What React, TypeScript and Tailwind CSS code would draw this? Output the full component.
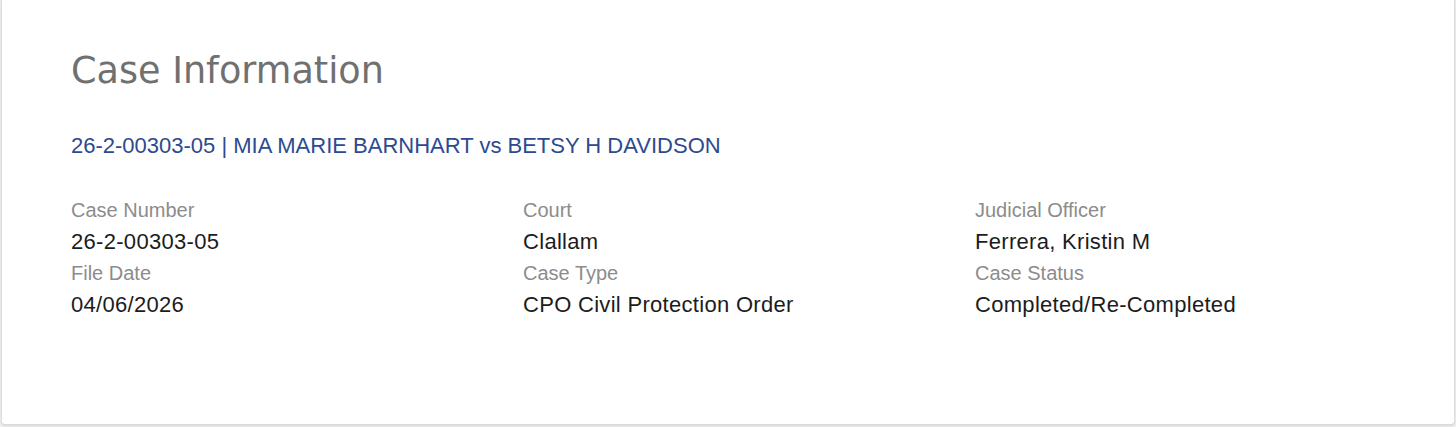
const fields = [
  [
    { label: 'Case Number', value: '26-2-00303-05' },
    { label: 'File Date', value: '04/06/2026' },
  ],
  [
    { label: 'Court', value: 'Clallam' },
    { label: 'Case Type', value: 'CPO Civil Protection Order' },
  ],
  [
    { label: 'Judicial Officer', value: 'Ferrera, Kristin M' },
    { label: 'Case Status', value: 'Completed/Re-Completed' },
  ],
]

function App() {
  return (
    <div className="w-[1456px] h-[427px] bg-[#f2f2f2] px-px overflow-hidden">
      {/* Card (top edge is scrolled out of view) */}
      <div className="h-[425px] bg-white border-x border-b border-[#dcdcdc] rounded-b-[4px] shadow-sm pl-[69px] pt-[50px] font-['Liberation_Sans',Arial,sans-serif]">
        <h2 className="font-['DejaVu_Sans',Verdana,sans-serif] text-[36.6px] leading-[42px] text-[#707070]">
          Case Information
        </h2>

        <div className="mt-[39px] text-[22px] leading-[30px] text-[#2d4a8f]">
          26-2-00303-05 | MIA MARIE BARNHART vs BETSY H DAVIDSON
        </div>

        <div className="mt-[34px] grid grid-cols-[452px_452px_452px]">
          {fields.map((col, i) => (
            <div key={i}>
              {col.map((f) => (
                <div key={f.label}>
                  <div className="text-[20px] leading-[30px] text-[#8c8c8c]">{f.label}</div>
                  <div className="text-[22px] leading-[33px] tracking-[0.3px] text-[#1c1c1c]">{f.value}</div>
                </div>
              ))}
            </div>
          ))}
        </div>
      </div>
    </div>
  )
}

export default App
